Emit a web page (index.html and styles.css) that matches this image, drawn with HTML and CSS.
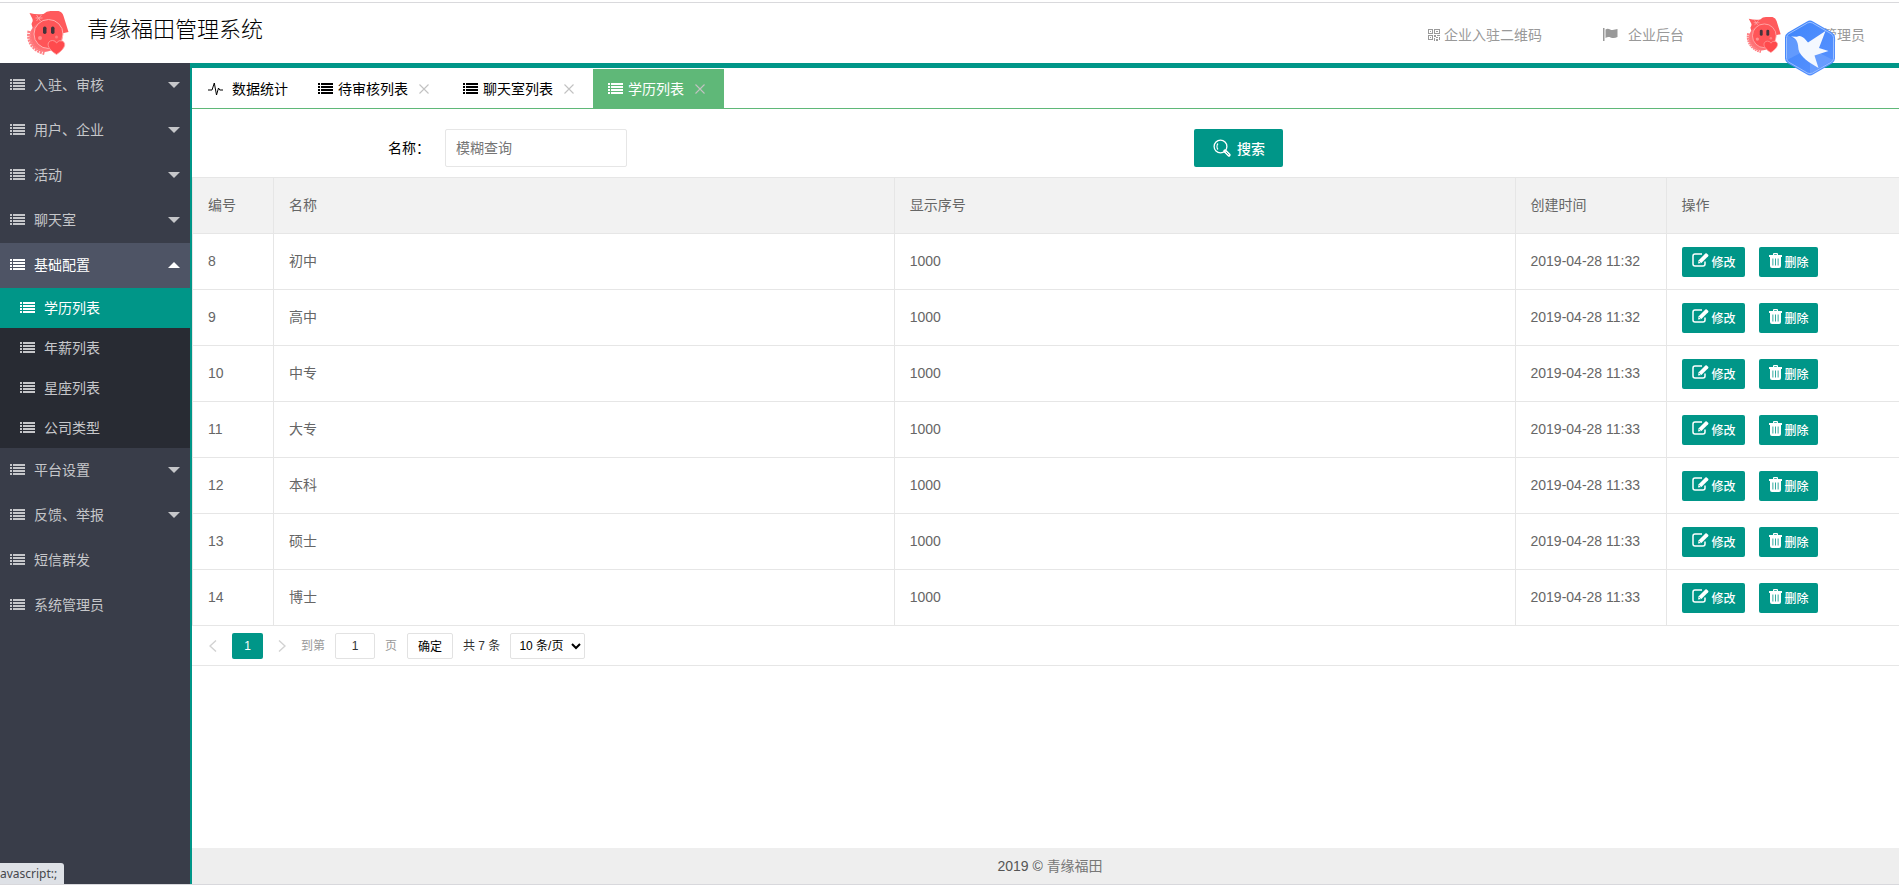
FILE: index.html
```html
<!DOCTYPE html>
<html lang="zh-CN">
<head>
<meta charset="utf-8">
<title>青缘福田管理系统</title>
<link rel="stylesheet" href="styles.css">
</head>
<body>
<svg class="sprite" aria-hidden="true">
  <symbol id="list" viewBox="0 0 15 12"><path d="M0 0h2v2H0zM3 0h12v2H3zM0 3h2v2H0zM3 3h12v2H3zM0 6h2v2H0zM3 6h12v2H3zM0 9h2v2H0zM3 9h12v2H3z"/></symbol>
  <symbol id="pulse" viewBox="0 0 15 14"><path d="M0 8h4L6.300 1l2.200 12 2-7 1.200 2H15" fill="none" stroke="currentColor" stroke-width="1"/></symbol>
  <symbol id="qr" viewBox="0 0 12 12"><path fill-rule="evenodd" d="M0 0h5v5H0zM1 1v3h3V1zM2 2h1v1H2zM6 0h6v5H6zM7 1v3h4V1zM8 2h2v1H8zM0 6h5v5H0zM1 7v3h3V7zM2 8h1v1H2zM6 6h2v2H6zM9 6h3v1H9zM8 8h2v1H8zM11 8h1v3h-1zM6 9h1v3H6zM8 10h2v2H8z"/></symbol>
  <symbol id="flag" viewBox="0 0 15 13"><path d="M0 0h1.500v13H0zM2.500 1.500c3-2 5 .8 7 .6 2-.1 3-.7 5-1v8c-3 1.400-5 1-7 .3s-3-.2-5 .7z"/></symbol>
  <symbol id="search" viewBox="0 0 18 18"><g fill="none" stroke="currentColor"><circle cx="7.500" cy="7.500" r="6.400" stroke-width="1.300"/><path d="M5 4.500C3.600 6 3.600 9 5 10.500" stroke-width="1.100"/><path d="M12 12l4 4" stroke-width="3.200" stroke-linecap="round"/></g><path d="M12.800 12.800l3 3" stroke="#009688" stroke-width=".8"/></symbol>
  <symbol id="edit" viewBox="0 0 17 14"><path d="M13 8.500V11a2 2 0 0 1-2 2H3a2 2 0 0 1-2-2V3a2 2 0 0 1 2-2h7" fill="none" stroke="currentColor" stroke-width="1.500"/><path d="M6 10.500l.7-3.300L13.400.5a1 1 0 0 1 1.400 0l1.300 1.300a1 1 0 0 1 0 1.400L9.400 9.900z"/><path d="M7.500 8.500l1 1" stroke="#009688"/></symbol>
  <symbol id="trash" viewBox="0 0 13 15"><path fill-rule="evenodd" d="M4 2V1q0-1 1-1h3q1 0 1 1v1h4v2h-1v9q0 2-2 2H3q-2 0-2-2V4H0V2zM5.200 2h2.600V1.200H5.200zM3.500 5.500v7h.8v-7zM6.100 5.500v7h.8v-7zM8.700 5.500v7h.8v-7z"/></symbol>
  <symbol id="close" viewBox="0 0 10 10"><path d="M.5.5l9 9M9.500.5l-9 9" fill="none" stroke="currentColor" stroke-width="1.100"/></symbol>
  <symbol id="prev" viewBox="0 0 8 12"><path d="M7 .5L1 6l6 5.500" fill="none" stroke="currentColor" stroke-width="1.400"/></symbol>
  <symbol id="next" viewBox="0 0 8 12"><path d="M1 .5L7 6l-6 5.500" fill="none" stroke="currentColor" stroke-width="1.400"/></symbol>
  <symbol id="mascot" viewBox="2 0 42 44">
    <path d="M5 2q7 2 14 1 3-3 7-3h8q4 1 5 5l5 16-9 2H10L7 13q2-3 1-5z" fill="#ff5a5c"/>
    <circle cx="20" cy="26" r="15" fill="#ff7074"/>
    <path d="M5 20c-2 10 3 19 15 22" fill="none" stroke="#ff8084" stroke-width="4" stroke-dasharray="2 .8"/>
    <circle cx="24" cy="23" r="14.500" fill="#ff5558" stroke="#ffb0b0" stroke-width="1"/>
    <path d="M12 4l4 6M17 4l-5 6M11 7h7" stroke="#ffb0b0" stroke-width=".8"/>
    <circle cx="15.500" cy="27" r="2" fill="#ff9090"/><circle cx="32" cy="26" r="1.500" fill="#ff8080"/>
    <rect x="18.500" y="15.500" width="3.500" height="7.500" rx="1.700" fill="#43343b"/><rect x="26.500" y="15.500" width="3.500" height="7.500" rx="1.700" fill="#43343b"/>
    <path d="M32 43.500C20 36 23 29.500 28 29.500q3 0 4 2.500 2-3.500 6-2c5 3 1 9-6 13.500z" fill="#ff4a4d" stroke="#ffa5a5" stroke-width=".8"/>
  </symbol>
</svg>

<header class="header">
  <a class="brand" href="#"><svg class="logo"><use href="#mascot"/></svg><h1>青缘福田管理系统</h1></a>
  <nav class="top-nav">
    <a class="qr-link" href="#"><svg class="icon-qr"><use href="#qr"/></svg>企业入驻二维码</a>
    <a class="flag-link" href="#"><svg class="icon-flag"><use href="#flag"/></svg>企业后台</a>
    <a class="user" href="#"><svg class="avatar"><use href="#mascot"/></svg>管理员
      <svg class="bird" viewBox="0 0 50 56">
        <defs><linearGradient id="blue" x1="0" y1="0" x2="1" y2="1"><stop offset="0" stop-color="#3f86fb"/><stop offset="1" stop-color="#5a92ff"/></linearGradient></defs>
        <path d="M22 1.500q3-2 6 0l19 11q3 2 3 5v21q0 3-3 5L28 54.500q-3 2-6 0l-19-11q-3-2-3-5v-21q0-3 3-5z" fill="url(#blue)"/>
        <path d="M25 28L2 15v25zM25 28l23 12-23 14z" fill="#80adff" opacity=".45"/>
        <path d="M22.500 3q2.500-1.500 5 0L46 13.700q2.500 1.500 2.500 4v20.600q0 2.500-2.500 4L27.500 53q-2.500 1.500-5 0L4 42.300q-2.500-1.500-2.500-4V17.700q0-2.500 2.500-4z" fill="none" stroke="#9cc0ff" stroke-width="1"/>
        <path d="M6 16.500l6 .2c2-1.500 5-.7 7.500 1.800l3.500 4L40.500 11 34 28l9.500 3-14 4.500L33.500 48C25 43 15 37 13.500 29.500 13 24 13 19 6 16.500z" fill="#f4f8ff"/>
      </svg>
    </a>
  </nav>
</header>

<div class="layout">
  <aside class="sidebar">
    <ul class="menu">
      <li><a class="item" href="#"><svg class="icon-list"><use href="#list"/></svg>入驻、审核<i class="caret"></i></a></li>
      <li><a class="item" href="#"><svg class="icon-list"><use href="#list"/></svg>用户、企业<i class="caret"></i></a></li>
      <li><a class="item" href="#"><svg class="icon-list"><use href="#list"/></svg>活动<i class="caret"></i></a></li>
      <li><a class="item" href="#"><svg class="icon-list"><use href="#list"/></svg>聊天室<i class="caret"></i></a></li>
      <li><a class="item open" href="#"><svg class="icon-list"><use href="#list"/></svg>基础配置<i class="caret up"></i></a>
        <ul class="submenu">
          <li><a class="item sub current" href="#"><svg class="icon-list"><use href="#list"/></svg>学历列表</a></li>
          <li><a class="item sub" href="#"><svg class="icon-list"><use href="#list"/></svg>年薪列表</a></li>
          <li><a class="item sub" href="#"><svg class="icon-list"><use href="#list"/></svg>星座列表</a></li>
          <li><a class="item sub" href="#"><svg class="icon-list"><use href="#list"/></svg>公司类型</a></li>
        </ul>
      </li>
      <li><a class="item" href="#"><svg class="icon-list"><use href="#list"/></svg>平台设置<i class="caret"></i></a></li>
      <li><a class="item" href="#"><svg class="icon-list"><use href="#list"/></svg>反馈、举报<i class="caret"></i></a></li>
      <li><a class="item" href="#"><svg class="icon-list"><use href="#list"/></svg>短信群发</a></li>
      <li><a class="item" href="#"><svg class="icon-list"><use href="#list"/></svg>系统管理员</a></li>
    </ul>
  </aside>

  <div class="content">
    <nav class="tabs">
      <a class="tab home" href="#"><svg class="icon-pulse"><use href="#pulse"/></svg>数据统计</a>
      <a class="tab" href="#"><svg class="icon-list"><use href="#list"/></svg>待审核列表<svg class="icon-close"><use href="#close"/></svg></a>
      <a class="tab" href="#"><svg class="icon-list"><use href="#list"/></svg>聊天室列表<svg class="icon-close"><use href="#close"/></svg></a>
      <a class="tab active" href="#"><svg class="icon-list"><use href="#list"/></svg>学历列表<svg class="icon-close"><use href="#close"/></svg></a>
    </nav>
    <main>
      <form class="search">
        <div class="field"><label for="name">名称：</label><input id="name" type="text" placeholder="模糊查询"></div>
        <button type="button" class="search-btn"><svg class="icon-search"><use href="#search"/></svg>搜索</button>
      </form>
      <table class="grid">
        <colgroup><col class="c-id"><col><col><col class="c-time"><col class="c-ops"></colgroup>
        <thead><tr><th>编号</th><th>名称</th><th>显示序号</th><th>创建时间</th><th>操作</th></tr></thead>
        <tbody id="rows"></tbody>
      </table>
      <div class="pager">
        <button type="button" class="arrow" aria-label="上一页"><svg class="icon-arrow"><use href="#prev"/></svg></button>
        <button type="button" class="page">1</button>
        <button type="button" class="arrow" aria-label="下一页"><svg class="icon-arrow"><use href="#next"/></svg></button>
        <label class="muted" for="goto">到第</label>
        <input id="goto" class="goto" type="text" value="1">
        <span class="muted">页</span>
        <button type="button" class="confirm">确定</button>
        <span class="total">共 7 条</span>
        <select class="limit" aria-label="每页条数"><option>10 条/页</option></select>
      </div>
    </main>
    <footer class="footer">2019 ©&nbsp;<a href="#">青缘福田</a></footer>
  </div>
</div>
<div class="status">avascript:;</div>
<script src="app.js"></script>
</body>
</html>
```
FILE: app.js
```js
const rows = [
  [8, '初中', '11:32'], [9, '高中', '11:32'], [10, '中专', '11:33'], [11, '大专', '11:33'],
  [12, '本科', '11:33'], [13, '硕士', '11:33'], [14, '博士', '11:33'],
];
document.getElementById('rows').innerHTML = rows.map(([id, name, time]) => `
  <tr><td>${id}</td><td>${name}</td><td>1000</td><td>2019-04-28 ${time}</td>
  <td><div class="ops"><button type="button" class="op"><svg class="icon-edit"><use href="#edit"/></svg>修改</button><button type="button" class="op"><svg class="icon-trash"><use href="#trash"/></svg>删除</button></div></td></tr>`).join('');
```
FILE: styles.css
```css
* { box-sizing: border-box; }
body {
  margin: 0;
  height: 100vh;
  display: flex;
  flex-direction: column;
  font: 14px/24px "Liberation Sans", "Noto Sans CJK SC", sans-serif;
  color: #000;
  background: #fff;
  border-bottom: 1px solid #d8d8dc;
}
a { color: inherit; text-decoration: none; }
ul { margin: 0; padding: 0; list-style: none; }
svg { flex: none; fill: currentColor; }
button, input, select { font-family: inherit; margin: 0; }
.sprite { position: absolute; width: 0; height: 0; }

.header {
  flex: none;
  height: 63px;
  padding: 0 34px 0 26px;
  display: flex;
  justify-content: space-between;
  background: linear-gradient(#d9d9dc, #d9d9dc) 0 2px / 100% 1px no-repeat;
}
.brand { display: flex; align-items: flex-start; gap: 18px; padding-top: 11px; }
.brand h1 { margin: 0; font-size: 22px; line-height: 38px; font-weight: 300; }
.logo { width: 43px; height: 44px; }
.top-nav { display: flex; align-items: center; padding-top: 6px; color: #999; }
.top-nav a { display: flex; align-items: center; }
.qr-link { gap: 4px; margin-right: 61px; }
.flag-link { gap: 10px; margin-right: 62px; }
.icon-qr { width: 12px; height: 12px; }
.icon-flag { width: 15px; height: 13px; }
.user { position: relative; gap: 42px; }
.avatar { width: 35px; height: 36px; }
.bird { position: absolute; left: 39px; top: 3px; width: 50px; height: 56px; }

.layout { flex: 1; min-height: 0; display: flex; }
.sidebar { flex: none; width: 192px; background: #393d49; border-right: 2px solid #009688; color: #c6c7ca; }
.item { display: flex; align-items: center; height: 45px; padding: 0 10px 2px; gap: 9px; }
.icon-list { width: 15px; height: 12px; }
.caret { margin-left: auto; border: 6px solid transparent; border-top-color: currentColor; border-bottom-width: 0; }
.caret.up { border-width: 0 6px 6px; border-bottom-color: currentColor; }
.item.open { background: #4e5465; color: #fff; }
.submenu { background: #282b33; }
.item.sub { height: 40px; padding: 0 10px 0 20px; }
.item.current { background: #009688; color: #fff; }

.content { flex: 1; min-width: 0; display: flex; flex-direction: column; border-top: 5px solid #009688; }
.tabs { flex: none; display: flex; padding-top: 1px; border-bottom: 1px solid #5fb878; }
.tab { display: flex; align-items: center; height: 39px; padding: 0 19px 0 15px; gap: 5px; }
.tab.home { gap: 9px; padding: 0 15px 0 16px; }
.tab.active { background: #5fb878; color: #fff; }
.icon-pulse { width: 15px; height: 14px; }
.icon-close { width: 10px; height: 10px; margin-left: 6px; color: #c2c2c2; }
main { flex: 1; }

.search { display: flex; align-items: center; padding: 20px 0 10px; }
.field { display: flex; align-items: center; width: 1002px; padding-left: 196px; gap: 15px; }
.field input { width: 182px; height: 38px; padding: 0 10px; border: 1px solid #e6e6e6; border-radius: 2px; font-size: 14px; }
.field input::placeholder { color: #757575; }
.search-btn {
  display: flex; align-items: center; gap: 6px; height: 38px; padding: 0 18px 0 19px;
  border: 0; border-radius: 2px; background: #009688; color: #fff; font-size: 14px; font-weight: 500;
}
.icon-search { width: 18px; height: 18px; }

.grid { width: 100%; table-layout: fixed; border-collapse: collapse; color: #666; border-left: 1px solid #e6e6e6; }
.c-id { width: 81px; }
.c-time { width: 151px; }
.c-ops { width: 233px; }
.grid th, .grid td { height: 56px; padding: 0 15px 2px; border: 1px solid #e6e6e6; border-right: 0; text-align: left; font-weight: 400; }
.grid td:last-child { padding-bottom: 0; }
.grid th { background: #f2f2f2; }
.ops { display: flex; gap: 14px; }
.op {
  display: flex; align-items: center; gap: 3px; height: 30px; padding: 0 9px 0 10px;
  border: 0; border-radius: 2px; background: #009688; color: #fff; font-size: 12px; font-weight: 500;
}
.op svg { margin-bottom: 3px; }
.icon-edit { width: 17px; height: 14px; }
.icon-trash { width: 13px; height: 15px; }

.pager { display: flex; align-items: center; height: 40px; padding: 0 17px; border-bottom: 1px solid #e6e6e6; font-size: 12px; color: #333; }
.pager button, .pager input, .pager select { height: 26px; border-radius: 2px; font-size: 12px; }
.pager .arrow { width: 8px; padding: 0; border: 0; background: none; color: #d2d2d2; display: flex; align-items: center; }
.icon-arrow { width: 8px; height: 12px; }
.pager .page { width: 31px; margin: 0 15px; padding: 0; border: 0; background: #009688; color: #fff; }
.muted { color: #999; }
.pager label { margin-left: 15px; }
.pager .goto { width: 40px; margin: 0 10px; padding: 0; border: 1px solid #e2e2e2; text-align: center; color: #333; }
.pager .confirm { width: 46px; margin: 0 10px; padding: 0; border: 1px solid #e2e2e2; background: #fff; color: #000; }
.pager .limit { width: 75px; margin-left: 10px; padding: 0 0 0 4px; border: 1px solid #e2e2e2; background: #fff; color: #000; }

.footer { flex: none; height: 36px; display: flex; align-items: center; justify-content: center; padding-left: 9px; background: #eee; color: #555; }
.footer a { color: #777; }
.status {
  position: fixed; left: 0; bottom: 1px; padding-right: 7px;
  border-top-right-radius: 3px; background: #dee1e6; color: #45474c;
  font: 12px/21px "Noto Sans", sans-serif; white-space: nowrap;
}
```
